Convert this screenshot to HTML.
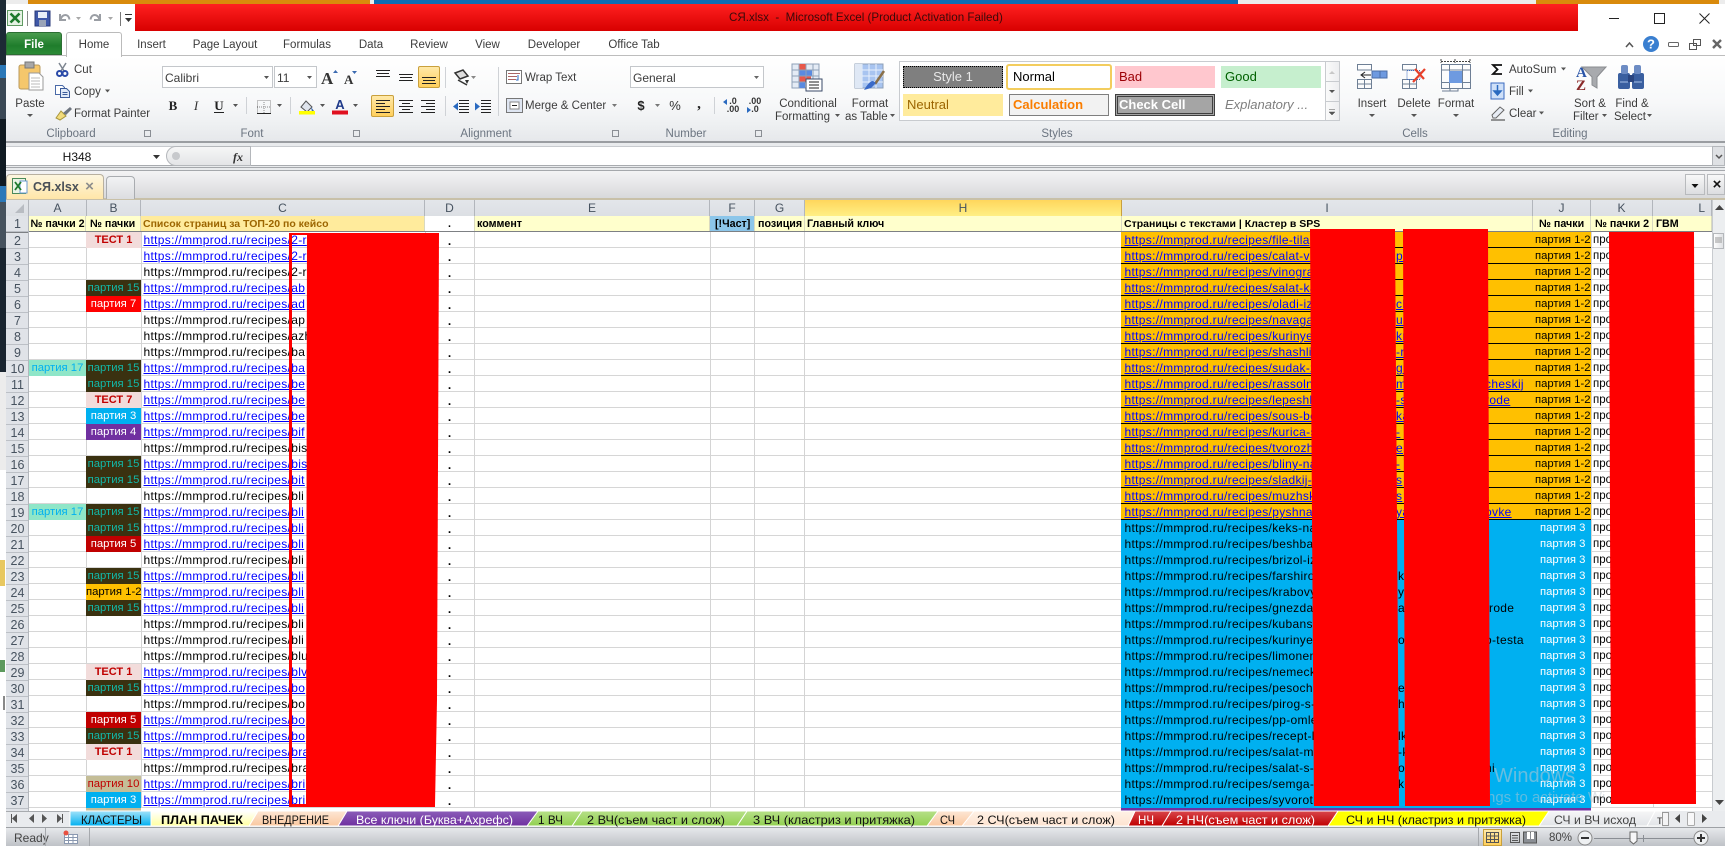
<!DOCTYPE html>
<html lang="ru"><head><meta charset="utf-8"><title>СЯ.xlsx - Microsoft Excel</title>
<style>
html,body{margin:0;padding:0;width:1725px;height:846px;overflow:hidden;background:#fff}
body{position:relative;font-family:"Liberation Sans","Noto Sans CJK SC",sans-serif;font-size:11.5px;color:#3c3c3c}
div,span,a{box-sizing:border-box}
.a{position:absolute}
.t{position:absolute;white-space:nowrap;line-height:16px;height:16px;margin-top:1px}
.c{transform:translateX(-50%)}
.g{color:#6b7480}
.h{position:absolute;top:200px;height:16px;background:linear-gradient(#e3e6ea,#dcdfe4);border-right:1px solid #b2b6bc;text-align:center;line-height:16px;font-size:12px;color:#46525f}
.r1{position:absolute;top:216px;height:15.5px;background:#ffffcc;font-weight:bold;font-size:10.7px;color:#000;line-height:17px;white-space:nowrap;overflow:hidden;padding-left:2px;border-right:1px solid #d9d9c0}
.v{position:absolute;top:232px;height:576px;width:1px;background:#d4d4d4}
.col{position:absolute;top:232px;font-size:12px;line-height:16px;white-space:nowrap;color:#000}
.col div{height:16px;position:relative}
.b{font-size:11.3px}
.b div{text-align:center}
.q{background:#3a3110;color:#12b8a8}
.e{background:#f2dcdb;color:#c00000;font-weight:bold;font-size:11px;line-height:17px}
.p3{background:#00b0f0;color:#fff}
.p4{background:#7030a0;color:#fff}
.p5{background:#c00000;color:#fff}
.p7{background:#f00;color:#fff}
.p1{background:#ffc000;color:#000}
.p0{background:#c4bd97;color:#c00000}
.p17{background:#8fe6c8;color:#00b0f0}
.u{padding-left:2.5px;letter-spacing:.32px;overflow:visible}
.u a{color:#00f;text-decoration:underline}
.o{background:#ffc000;box-shadow:inset 0 -1px #000}
.s{background:#00b0f0}
.i{padding-left:3.5px;letter-spacing:.32px}
.o a{color:#00f;text-decoration:underline}
.s a{color:#000}
.x{position:absolute;top:0}
.n div{text-align:center;border-bottom:1px solid #bcc0c6;color:#46525f;font-size:12.5px;background:#e0e3e8}
.j{font-size:11.3px}
.j .o{padding-left:2px}
.j .s{padding-left:7px;color:#fff}
svg{position:absolute;left:0;top:0;overflow:visible}
.sty{position:absolute;height:22px;line-height:22px;font-size:13px;padding-left:4px;white-space:nowrap}
</style></head><body>

<!-- desktop sliver -->
<div class="a" style="left:0;top:0;width:6px;height:65px;background:#1d2a35"></div>
<div class="a" style="left:0;top:65px;width:6px;height:13px;background:#2b78b8"></div>
<div class="a" style="left:0;top:78px;width:6px;height:41px;background:#3a4855"></div>
<div class="a" style="left:0;top:119px;width:6px;height:67px;background:#101a22"></div>
<div class="a" style="left:0;top:186px;width:6px;height:16px;background:#2b78b8"></div>
<div class="a" style="left:0;top:202px;width:6px;height:46px;background:#46525e"></div>
<div class="a" style="left:0;top:248px;width:6px;height:124px;background:#1a2530"></div>
<div class="a" style="left:0;top:372px;width:6px;height:98px;background:#ececec"></div>
<div class="a" style="left:0;top:470px;width:6px;height:376px;background:#fff"></div>
<div class="a" style="left:0;top:560px;width:5px;height:26px;background:#e8c860"></div>
<div class="a" style="left:0;top:660px;width:5px;height:12px;background:#5d9a5d"></div>
<div class="a" style="left:3px;top:696px;width:2px;height:14px;background:#888"></div>

<!-- top strip -->
<div class="a" style="left:6px;top:0;width:1719px;height:4px;background:#ececec"></div>
<div class="a" style="left:28px;top:0;width:342px;height:4px;background:#d98a0c"></div>
<div class="a" style="left:374px;top:0;width:864px;height:4px;background:#0d6cb3"></div>
<div class="a" style="left:1536px;top:0;width:183px;height:4px;background:#d98a0c"></div>

<!-- title -->
<div class="a" style="left:6px;top:4px;width:1719px;height:52px;background:#fff"></div>
<div class="a" style="left:135px;top:4px;width:1443px;height:27px;background:linear-gradient(#ff2020,#d80000)"></div>
<span class="t" style="left:729px;top:9px;font-size:11.6px;color:#3a0a0a">СЯ.xlsx&nbsp; -&nbsp; Microsoft Excel (Product Activation Failed)</span>

<!-- tabs -->
<div class="a" style="left:6px;top:32px;width:56px;height:23px;border-radius:3px 3px 0 0;background:linear-gradient(#4a9c4e,#1f7d2c 60%,#2b8a36);border:1px solid #2c6e33"></div>
<span class="t c" style="left:34px;top:36px;color:#fff;font-weight:bold">File</span>
<div class="a" style="left:66px;top:32px;width:56px;height:25px;background:#fff;border:1px solid #bbb;border-bottom:0;border-radius:3px 3px 0 0;z-index:2"></div>
<span class="t c" style="left:94px;top:36px;z-index:3">Home</span>
<span class="t c" style="left:151.5px;top:36px">Insert</span>
<span class="t c" style="left:225px;top:36px">Page Layout</span>
<span class="t c" style="left:307px;top:36px">Formulas</span>
<span class="t c" style="left:371px;top:36px">Data</span>
<span class="t c" style="left:429px;top:36px">Review</span>
<span class="t c" style="left:487.5px;top:36px">View</span>
<span class="t c" style="left:554px;top:36px">Developer</span>
<span class="t c" style="left:634px;top:36px">Office Tab</span>

<!-- ribbon -->
<div class="a" style="left:6px;top:55px;width:1719px;height:1px;background:#bdbdbd"></div>
<div class="a" style="left:6px;top:56px;width:1719px;height:85px;background:linear-gradient(#fff,#f7f8f9 55%,#eef0f2 80%,#e6e8eb)"></div>
<div class="a" style="left:6px;top:141px;width:1719px;height:2px;background:#9a9da1"></div>
<div class="a" style="left:6px;top:143px;width:1719px;height:27px;background:#e9ebed"></div>

<!-- ribbon combos -->
<div class="a" style="left:162px;top:66px;width:111px;height:22px;background:#fff;border:1px solid #c4c7cb"></div>
<div class="a" style="left:274px;top:66px;width:43px;height:22px;background:#fff;border:1px solid #c4c7cb"></div>
<div class="a" style="left:630px;top:66px;width:134px;height:22px;background:#fff;border:1px solid #c4c7cb"></div>
<div class="a" style="left:418px;top:66px;width:22px;height:22px;background:linear-gradient(#ffe9a8,#ffcf5c);border:1px solid #c9a03c;border-radius:2px"></div>
<div class="a" style="left:371px;top:95px;width:23px;height:22px;background:linear-gradient(#ffe9a8,#ffcf5c);border:1px solid #c9a03c;border-radius:2px"></div>

<span class="t c" style="left:30px;top:95px">Paste</span>
<span class="t" style="left:74px;top:61px">Cut</span>
<span class="t" style="left:74px;top:83px">Copy</span>
<span class="t" style="left:74px;top:105px">Format Painter</span>
<span class="t c g" style="left:71px;top:125px">Clipboard</span>
<span class="t" style="left:165px;top:69px;font-size:12px">Calibri</span>
<span class="t" style="left:277px;top:69px;font-size:12px">11</span>
<span class="t c g" style="left:252px;top:125px">Font</span>
<span class="t" style="left:525px;top:69px">Wrap Text</span>
<span class="t" style="left:525px;top:97px">Merge &amp; Center</span>
<span class="t c g" style="left:486px;top:125px">Alignment</span>
<span class="t" style="left:633px;top:69px;font-size:12px">General</span>
<span class="t c g" style="left:686px;top:125px">Number</span>
<span class="t c" style="left:808px;top:95px">Conditional</span>
<span class="t" style="left:775px;top:108px">Formatting</span>
<span class="t c" style="left:870px;top:95px">Format</span>
<span class="t" style="left:845px;top:108px">as Table</span>
<span class="t c g" style="left:1057px;top:125px">Styles</span>
<span class="t c" style="left:1372px;top:95px">Insert</span>
<span class="t c" style="left:1414px;top:95px">Delete</span>
<span class="t c" style="left:1456px;top:95px">Format</span>
<span class="t c g" style="left:1415px;top:125px">Cells</span>
<span class="t" style="left:1509px;top:61px">AutoSum</span>
<span class="t" style="left:1509px;top:83px">Fill</span>
<span class="t" style="left:1509px;top:105px">Clear</span>
<span class="t c" style="left:1590px;top:95px">Sort &amp;</span>
<span class="t" style="left:1573px;top:108px">Filter</span>
<span class="t c" style="left:1632px;top:95px">Find &amp;</span>
<span class="t" style="left:1614px;top:108px">Select</span>
<span class="t c g" style="left:1570px;top:125px">Editing</span>

<!-- styles gallery -->
<div class="a" style="left:899px;top:61px;width:441px;height:60px;background:#fff;border:1px solid #c8cbcf"></div>
<div class="sty" style="left:903px;top:66px;width:100px;background:#7f7f7f;color:#e8e8e8;text-align:center;padding:0;outline:1px dotted #000;outline-offset:-1px">Style 1</div>
<div class="sty" style="left:1006px;top:64px;width:106px;height:26px;line-height:22px;background:#fff;color:#000;border:2px solid #f3cd5e;border-radius:3px;padding-left:5px">Normal</div>
<div class="sty" style="left:1115px;top:66px;width:100px;background:#ffc7ce;color:#9c0006">Bad</div>
<div class="sty" style="left:1221px;top:66px;width:100px;background:#c6efce;color:#006100">Good</div>
<div class="sty" style="left:903px;top:94px;width:100px;background:#ffeb9c;color:#9c6500">Neutral</div>
<div class="sty" style="left:1009px;top:94px;width:100px;background:#f2f2f2;color:#fa7d00;font-weight:bold;border:1px solid #7f7f7f;line-height:20px;padding-left:3px">Calculation</div>
<div class="sty" style="left:1115px;top:94px;width:100px;background:#a5a5a5;color:#fff;font-weight:bold;border:3px double #3f3f3f;line-height:16px;padding-left:1px">Check Cell</div>
<div class="sty" style="left:1221px;top:94px;width:100px;color:#7f7f7f;font-style:italic">Explanatory ...</div>
<div class="a" style="left:1325px;top:61px;width:15px;height:60px;background:linear-gradient(90deg,#fafafa,#edeef0);border:1px solid #c8cbcf"></div>
<div class="a" style="left:1325px;top:81px;width:15px;height:1px;background:#c8cbcf"></div>
<div class="a" style="left:1325px;top:101px;width:15px;height:1px;background:#c8cbcf"></div>

<!-- formula bar -->
<div class="a" style="left:6px;top:146px;width:1706px;height:20px;background:#fff;border-bottom:1px solid #a8abaf;border-top:1px solid #c8cbcf"></div>
<span class="t c" style="left:77px;top:148px;font-size:12px;color:#111">H348</span>
<div class="a" style="left:166px;top:146px;width:85px;height:20px;background:linear-gradient(#f6f6f6,#e4e5e7);border:1px solid #b4b7bb;border-radius:10px 0 0 10px"></div>
<div class="a" style="left:172px;top:152px;width:8px;height:8px;border-radius:50%;background:#c7c9cc"></div>
<span class="t c" style="left:238px;top:148px;font:italic bold 12px 'Liberation Serif',serif;line-height:16px;color:#333">fx</span>
<div class="a" style="left:1712px;top:146px;width:13px;height:20px;background:#dfe1e4;border:1px solid #b4b7bb"></div>
<div class="a" style="left:6px;top:167px;width:1719px;height:3px;background:#e9ebed;border-top:1px solid #a5a8ac"></div>

<!-- document tab bar -->
<div class="a" style="left:6px;top:170px;width:1719px;height:28px;background:linear-gradient(#f4f4f5,#d8d9db);border-top:1px solid #a5a8ac"></div>
<div class="a" style="left:6px;top:198px;width:1719px;height:2px;background:#c8c0a8"></div>
<div class="a" style="left:6px;top:174px;width:98px;height:25px;border-radius:4px 4px 0 0;background:linear-gradient(#fdf6e0,#ffe6a8);border:1px solid #b8b0a0;border-bottom:0"></div>
<span class="t" style="left:33px;top:178px;font-size:12.5px;font-weight:bold;color:#4a5058">СЯ.xlsx</span>
<span class="t c" style="left:89.5px;top:178px;font-size:15px;color:#8c8c8c;font-weight:bold">×</span>
<div class="a" style="left:106px;top:176px;width:29px;height:23px;background:linear-gradient(#f2f3f4,#dcdde0);border:1px solid #a9acb0;border-bottom:0;border-radius:4px 4px 0 0"></div>
<div class="a" style="left:1685px;top:174px;width:20px;height:21px;background:linear-gradient(#f8f8f8,#dcdde0);border:1px solid #b8babd"></div>
<div class="a" style="left:1707px;top:174px;width:18px;height:21px;background:linear-gradient(#f8f8f8,#dcdde0);border:1px solid #b8babd"></div>
<span class="t c" style="left:1717px;top:176px;font-size:15px;font-weight:bold;color:#111">×</span>

<!-- column headers -->
<div class="h" style="left:6px;width:23px"></div>
<div class="h" style="left:29px;width:58px">A</div>
<div class="h" style="left:87px;width:54px">B</div>
<div class="h" style="left:141px;width:284px">C</div>
<div class="h" style="left:425px;width:50px">D</div>
<div class="h" style="left:475px;width:235px">E</div>
<div class="h" style="left:710px;width:45px">F</div>
<div class="h" style="left:755px;width:50px">G</div>
<div class="h" style="left:805px;width:317px;background:linear-gradient(#ffd65c,#ffef85);border-right-color:#c8a040">H</div>
<div class="h" style="left:1122px;width:411px">I</div>
<div class="h" style="left:1533px;width:58px">J</div>
<div class="h" style="left:1591px;width:62px">K</div>
<div class="h" style="left:1653px;width:59px;text-align:right;padding-right:6px">L</div>

<!-- row 1 -->
<div class="r1" style="left:29px;width:57px;padding-left:1.5px">№ пачки 2</div>
<div class="r1" style="left:86px;width:55px;padding-left:4px">№ пачки</div>
<div class="r1" style="left:141px;width:284px;background:#ffeb9c;color:#9c6500;font-size:10.5px">Список страниц за ТОП-20 по кейсо</div>
<div class="r1" style="left:425px;width:50px;background:#fff;text-align:center;padding:0">.</div>
<div class="r1" style="left:475px;width:235px">коммент</div>
<div class="r1" style="left:710px;width:45px;background:#8cc6ea;padding-left:5px">[!Част]</div>
<div class="r1" style="left:755px;width:50px;padding-left:3px">позиция</div>
<div class="r1" style="left:805px;width:317px">Главный ключ</div>
<div class="r1" style="left:1122px;width:411px;font-size:10.5px">Страницы с текстами | Кластер в SPS</div>
<div class="r1" style="left:1533px;width:58px;padding-left:6px">№ пачки</div>
<div class="r1" style="left:1591px;width:62px;padding-left:4px">№ пачки 2</div>
<div class="r1" style="left:1653px;width:59px;padding-left:3px">ГВМ</div>
<div class="a" style="left:6px;top:231px;width:1706px;height:1px;background:#7d8084"></div>

<!-- grid -->
<div class="a" style="left:29px;top:232px;width:1683px;height:579px;background:repeating-linear-gradient(to bottom,#fff 0,#fff 15px,#d6d6d6 15px,#d6d6d6 16px)"></div>
<div class="v" style="left:86px"></div><div class="v" style="left:141px"></div><div class="v" style="left:425px"></div><div class="v" style="left:474px"></div><div class="v" style="left:710px"></div><div class="v" style="left:754px"></div><div class="v" style="left:804px"></div><div class="v" style="left:1121px"></div><div class="v" style="left:1533px"></div><div class="v" style="left:1591px"></div><div class="v" style="left:1653px"></div>

<!-- row headers -->
<div class="col n" style="left:6px;width:23px;top:216px">
<div>1</div><div style="height:1px;background:#7d8084;border:0"></div><div>2</div><div>3</div><div>4</div><div>5</div><div>6</div><div>7</div><div>8</div><div>9</div><div>10</div><div>11</div><div>12</div><div>13</div><div>14</div><div>15</div><div>16</div><div>17</div><div>18</div><div>19</div><div>20</div><div>21</div><div>22</div><div>23</div><div>24</div><div>25</div><div>26</div><div>27</div><div>28</div><div>29</div><div>30</div><div>31</div><div>32</div><div>33</div><div>34</div><div>35</div><div>36</div><div>37</div><div style="height:3px"></div>
</div>
<div class="a" style="left:28px;top:200px;width:1px;height:611px;background:#b2b6bc"></div>

<!-- column A -->
<div class="col b" style="left:29px;width:57px">
<div class="p17" style="position:absolute;top:128px;left:0;width:57px">партия 17</div>
<div class="p17" style="position:absolute;top:272px;left:0;width:57px">партия 17</div>
</div>

<!-- column B -->
<div class="col b" style="left:86px;width:55px">
<div class="e">ТЕСТ 1</div><div></div><div></div>
<div class="q">партия 15</div>
<div class="p7">партия 7</div>
<div></div><div></div><div></div>
<div class="q">партия 15</div>
<div class="q">партия 15</div>
<div class="e">ТЕСТ 7</div>
<div class="p3">партия 3</div>
<div class="p4">партия 4</div>
<div></div>
<div class="q">партия 15</div>
<div class="q">партия 15</div>
<div></div>
<div class="q">партия 15</div>
<div class="q">партия 15</div>
<div class="p5">партия 5</div>
<div></div>
<div class="q">партия 15</div>
<div class="p1">партия 1-2</div>
<div class="q">партия 15</div>
<div></div><div></div><div></div>
<div class="e">ТЕСТ 1</div>
<div class="q">партия 15</div>
<div></div>
<div class="p5">партия 5</div>
<div class="q">партия 15</div>
<div class="e">ТЕСТ 1</div>
<div></div>
<div class="p0">партия 10</div>
<div class="p3">партия 3</div>
<div class="p0" style="height:3px"></div>
</div>

<!-- column C -->
<div class="col" style="left:141px;width:284px">
<div class="u"><a>https://mmprod.ru/recipes/2-r</a></div>
<div class="u"><a>https://mmprod.ru/recipes/2-r</a></div>
<div class="u">https://mmprod.ru/recipes/2-r</div>
<div class="u"><a>https://mmprod.ru/recipes/ab</a></div>
<div class="u"><a>https://mmprod.ru/recipes/ad</a></div>
<div class="u">https://mmprod.ru/recipes/ap</div>
<div class="u">https://mmprod.ru/recipes/azh</div>
<div class="u">https://mmprod.ru/recipes/ba</div>
<div class="u"><a>https://mmprod.ru/recipes/ba</a></div>
<div class="u"><a>https://mmprod.ru/recipes/be</a></div>
<div class="u"><a>https://mmprod.ru/recipes/be</a></div>
<div class="u"><a>https://mmprod.ru/recipes/be</a></div>
<div class="u"><a>https://mmprod.ru/recipes/bif</a></div>
<div class="u">https://mmprod.ru/recipes/bis</div>
<div class="u"><a>https://mmprod.ru/recipes/bis</a></div>
<div class="u"><a>https://mmprod.ru/recipes/bit</a></div>
<div class="u">https://mmprod.ru/recipes/bli</div>
<div class="u"><a>https://mmprod.ru/recipes/bli</a></div>
<div class="u"><a>https://mmprod.ru/recipes/bli</a></div>
<div class="u"><a>https://mmprod.ru/recipes/bli</a></div>
<div class="u">https://mmprod.ru/recipes/bli</div>
<div class="u"><a>https://mmprod.ru/recipes/bli</a></div>
<div class="u"><a>https://mmprod.ru/recipes/bli</a></div>
<div class="u"><a>https://mmprod.ru/recipes/bli</a></div>
<div class="u">https://mmprod.ru/recipes/bli</div>
<div class="u">https://mmprod.ru/recipes/bli</div>
<div class="u">https://mmprod.ru/recipes/blu</div>
<div class="u"><a>https://mmprod.ru/recipes/blv</a></div>
<div class="u"><a>https://mmprod.ru/recipes/bo</a></div>
<div class="u">https://mmprod.ru/recipes/bo</div>
<div class="u"><a>https://mmprod.ru/recipes/bo</a></div>
<div class="u"><a>https://mmprod.ru/recipes/bo</a></div>
<div class="u"><a>https://mmprod.ru/recipes/bra</a></div>
<div class="u">https://mmprod.ru/recipes/bra</div>
<div class="u"><a>https://mmprod.ru/recipes/bri</a></div>
<div class="u"><a>https://mmprod.ru/recipes/bri</a></div>
</div>

<!-- column D dots -->
<div class="col b" style="left:425px;width:49px;font-weight:bold;top:233px;font-size:12px">
<div>.</div><div>.</div><div>.</div><div>.</div><div>.</div><div>.</div><div>.</div><div>.</div><div>.</div><div>.</div><div>.</div><div>.</div><div>.</div><div>.</div><div>.</div><div>.</div><div>.</div><div>.</div><div>.</div><div>.</div><div>.</div><div>.</div><div>.</div><div>.</div><div>.</div><div>.</div><div>.</div><div>.</div><div>.</div><div>.</div><div>.</div><div>.</div><div>.</div><div>.</div><div>.</div><div>.</div>
</div>

<!-- column I -->
<div class="col" style="left:1121px;width:412px">
<div class="o i"><a>https://mmprod.ru/recipes/file-tilap</a></div>
<div class="o i"><a>https://mmprod.ru/recipes/calat-vitam</a><a class="x" style="left:275px">pa</a></div>
<div class="o i"><a>https://mmprod.ru/recipes/vinogradn</a></div>
<div class="o i"><a>https://mmprod.ru/recipes/salat-kalm</a></div>
<div class="o i"><a>https://mmprod.ru/recipes/oladi-iz-te</a><a class="x" style="left:275px">ch</a></div>
<div class="o i"><a>https://mmprod.ru/recipes/navaga-je</a><a class="x" style="left:275px">uk</a></div>
<div class="o i"><a>https://mmprod.ru/recipes/kurinye-ne</a><a class="x" style="left:275px">kr</a></div>
<div class="o i"><a>https://mmprod.ru/recipes/shashlik-iz</a><a class="x" style="left:275px">-r</a></div>
<div class="o i"><a>https://mmprod.ru/recipes/sudak-zap</a><a class="x" style="left:275px">ga</a></div>
<div class="o i"><a>https://mmprod.ru/recipes/rassolnik-</a><a class="x" style="left:275px">m</a><a class="x" style="left:364px">cheskij</a></div>
<div class="o i"><a>https://mmprod.ru/recipes/lepeshki-s</a><a class="x" style="left:275px">-s</a><a class="x" style="left:364px">rode</a></div>
<div class="o i"><a>https://mmprod.ru/recipes/sous-besh</a><a class="x" style="left:275px">ka</a></div>
<div class="o i"><a>https://mmprod.ru/recipes/kurica-s-o</a><a class="x" style="left:275px">-</a></div>
<div class="o i"><a>https://mmprod.ru/recipes/tvorozhnyj</a><a class="x" style="left:275px">e</a></div>
<div class="o i"><a>https://mmprod.ru/recipes/bliny-na-k</a><a class="x" style="left:275px">-</a></div>
<div class="o i"><a>https://mmprod.ru/recipes/sladkij-pir</a><a class="x" style="left:275px">s</a></div>
<div class="o i"><a>https://mmprod.ru/recipes/muzhskoj-</a><a class="x" style="left:275px">s</a></div>
<div class="o i"><a>https://mmprod.ru/recipes/pyshnaya-</a><a class="x" style="left:275px">ya</a><a class="x" style="left:364px">ovke</a></div>
<div class="s i"><a>https://mmprod.ru/recipes/keks-na-k</a></div>
<div class="s i"><a>https://mmprod.ru/recipes/beshbarm</a></div>
<div class="s i"><a>https://mmprod.ru/recipes/brizol-iz-</a></div>
<div class="s i"><a>https://mmprod.ru/recipes/farshirova</a><a class="x" style="left:277px">k</a></div>
<div class="s i"><a>https://mmprod.ru/recipes/krabovyj-s</a><a class="x" style="left:277px">ya</a></div>
<div class="s i"><a>https://mmprod.ru/recipes/gnezda-i</a><a class="x" style="left:277px">ar</a><a class="x" style="left:368px">rode</a></div>
<div class="s i"><a>https://mmprod.ru/recipes/kubanskij</a></div>
<div class="s i"><a>https://mmprod.ru/recipes/kurinye-r</a><a class="x" style="left:277px">o</a><a class="x" style="left:364px">o-testa</a></div>
<div class="s i"><a>https://mmprod.ru/recipes/limonen</a></div>
<div class="s i"><a>https://mmprod.ru/recipes/nemeckij</a></div>
<div class="s i"><a>https://mmprod.ru/recipes/pesochn</a><a class="x" style="left:277px">ec</a></div>
<div class="s i"><a>https://mmprod.ru/recipes/pirog-s-k</a><a class="x" style="left:277px">h</a></div>
<div class="s i"><a>https://mmprod.ru/recipes/pp-omlet</a></div>
<div class="s i"><a>https://mmprod.ru/recipes/recept-ly</a><a class="x" style="left:277px">lk</a></div>
<div class="s i"><a>https://mmprod.ru/recipes/salat-mi</a><a class="x" style="left:277px">-k</a></div>
<div class="s i"><a>https://mmprod.ru/recipes/salat-s-k</a><a class="x" style="left:277px">ov</a><a class="x" style="left:364px">ni</a></div>
<div class="s i"><a>https://mmprod.ru/recipes/semga-s</a><a class="x" style="left:277px">ke</a></div>
<div class="s i"><a>https://mmprod.ru/recipes/syvorotk</a></div>
<div style="height:3px;background:#7030a0"></div>
</div>

<!-- column J -->
<div class="col j" style="left:1533px;width:58px">
<div class="o">партия 1-2</div><div class="o">партия 1-2</div><div class="o">партия 1-2</div><div class="o">партия 1-2</div><div class="o">партия 1-2</div><div class="o">партия 1-2</div><div class="o">партия 1-2</div><div class="o">партия 1-2</div><div class="o">партия 1-2</div><div class="o">партия 1-2</div><div class="o">партия 1-2</div><div class="o">партия 1-2</div><div class="o">партия 1-2</div><div class="o">партия 1-2</div><div class="o">партия 1-2</div><div class="o">партия 1-2</div><div class="o">партия 1-2</div><div class="o">партия 1-2</div>
<div class="s">партия 3</div><div class="s">партия 3</div><div class="s">партия 3</div><div class="s">партия 3</div><div class="s">партия 3</div><div class="s">партия 3</div><div class="s">партия 3</div><div class="s">партия 3</div><div class="s">партия 3</div><div class="s">партия 3</div><div class="s">партия 3</div><div class="s">партия 3</div><div class="s">партия 3</div><div class="s">партия 3</div><div class="s">партия 3</div><div class="s">партия 3</div><div class="s">партия 3</div><div class="s">партия 3</div>
<div style="height:3px;background:#7030a0"></div>
</div>

<!-- column K -->
<div class="col" style="left:1593px;width:18px;overflow:hidden;font-size:11.5px">
<div>про</div><div>про</div><div>про</div><div>про</div><div>про</div><div>про</div><div>про</div><div>про</div><div>про</div><div>про</div><div>про</div><div>про</div><div>про</div><div>про</div><div>про</div><div>про</div><div>про</div><div>про</div><div>про</div><div>про</div><div>про</div><div>про</div><div>про</div><div>про</div><div>про</div><div>про</div><div>про</div><div>про</div><div>про</div><div>про</div><div>про</div><div>про</div><div>про</div><div>про</div><div>про</div><div>про</div>
</div>

<!-- watermark -->
<span class="t" style="left:1494px;top:763px;height:24px;line-height:24px;font-size:20px;color:rgba(190,200,210,.55)">Windows</span>
<span class="t" style="left:1487px;top:789px;font-size:15px;color:rgba(190,200,210,.5)">ngs to activate Wi</span>

<!-- scrollbar -->
<div class="a" style="left:1712px;top:200px;width:13px;height:611px;background:#eceef0;border-left:1px solid #c8cbcf"></div>
<div class="a" style="left:1713px;top:233px;width:11px;height:16px;background:linear-gradient(90deg,#fdfdfd,#e0e2e5);border:1px solid #b4b7bb"></div>

<!-- sheet tab bar + status -->
<div class="a" style="left:6px;top:811px;width:1719px;height:16px;background:#e9ebee"></div>
<div class="a" style="left:6px;top:827px;width:1719px;height:19px;background:linear-gradient(#e6e8eb,#bfc2c7);border-top:1px solid #9ea1a5"></div>
<span class="t" style="left:14px;top:829px;color:#444;font-size:12px">Ready</span>
<div class="a" style="left:45px;top:828px;width:1px;height:18px;background:#a6a9ad"></div>
<div class="a" style="left:89px;top:828px;width:1px;height:18px;background:#a6a9ad"></div>
<div class="a" style="left:1478px;top:828px;width:1px;height:18px;background:#a6a9ad"></div>
<div class="a" style="left:1483px;top:829px;width:19px;height:17px;background:linear-gradient(#ffe9a8,#ffcf5c);border:1px solid #c9a03c"></div>
<span class="t" style="left:1549px;top:829px;color:#444;font-size:11.5px">80%</span>

<!-- vector icons and tabs -->
<svg width="1725" height="846" viewBox="0 0 1725 846" font-family="Liberation Sans, sans-serif">
<!-- QAT -->
<rect x="7.5" y="10.5" width="15" height="15" fill="#e6f2e4" stroke="#5f9a62"/><path d="M10.5 13.5l9 9M19.5 13.5l-9 9" stroke="#1d7a2b" stroke-width="2.6"/>
<path d="M27.5 11v15" stroke="#888"/>
<rect x="35" y="11" width="15" height="15" fill="#3f58a8" stroke="#2a3a78"/><rect x="38" y="12" width="9" height="6" fill="#e8eef8"/><rect x="39" y="20" width="7" height="6" fill="#9aa4b8"/>
<path d="M60 14v6h6M60.5 19.5c2-6 8-6 9 0" fill="none" stroke="#9a9ea4" stroke-width="2"/>
<path d="M100 14v6h-6M99.5 19.5c-2-6-8-6-9 0" fill="none" stroke="#9a9ea4" stroke-width="2"/>
<path d="M76 17h5l-2.500 3zM108 17h5l-2.500 3z" fill="#a8a8a8"/>
<path d="M120.5 12v14" stroke="#777"/>
<path d="M125 14.500h7" stroke="#333"/><path d="M125 18h7l-3.500 4z" fill="#333"/>

<!-- window controls -->
<path d="M1609 18.500h10" stroke="#222"/><rect x="1654.500" y="13.500" width="10" height="10" fill="none" stroke="#222"/><path d="M1699.500 13.500l10 10M1709.500 13.500l-10 10" stroke="#222"/>
<path d="M1626 47l3.500-4 3.500 4" fill="none" stroke="#555" stroke-width="1.500"/>
<circle cx="1651" cy="44" r="8" fill="#3a7fd0"/><text x="1651" y="48.500" text-anchor="middle" font-size="13" font-weight="bold" fill="#fff">?</text>
<rect x="1668.500" y="42.500" width="10" height="4" rx="1" fill="#fff" stroke="#666"/>
<rect x="1689.500" y="43.500" width="7" height="6" fill="#fff" stroke="#555"/><rect x="1693.500" y="39.500" width="7" height="6" fill="none" stroke="#555"/>
<path d="M1713 40l8 8M1721 40l-8 8" stroke="#666" stroke-width="2.400"/>

<!-- Paste -->
<rect x="19" y="65" width="21" height="24" rx="2" fill="#f5c76c" stroke="#b99a5e"/><rect x="25" y="62" width="9" height="6" fill="#a8a8a8" stroke="#777"/>
<path d="M29 73h10l4 4v13H29z" fill="#fff" stroke="#9a9a9a"/><path d="M31 78h9M31 81h9M31 84h9M31 87h9" stroke="#bbb"/>
<path d="M27 114h6l-3 3z" fill="#555"/>
<!-- Cut -->
<path d="M59 63l5 8M66 63l-5 8" stroke="#7d8590" stroke-width="1.500"/><circle cx="59.500" cy="73.500" r="2.500" fill="none" stroke="#2a4aa8" stroke-width="2"/><circle cx="65" cy="73.500" r="2.500" fill="none" stroke="#2a4aa8" stroke-width="2"/>
<!-- Copy -->
<path d="M55.500 85.500h7l2 2v7h-9z" fill="#fff" stroke="#4a6aa8"/><path d="M60.500 88.500h6l3 3v6h-9z" fill="#dfe9f8" stroke="#3a5a9a"/><path d="M62.500 92.500h5M62.500 94.500h5" stroke="#3a5a9a"/>
<path d="M105 89.500h5l-2.500 3z" fill="#555"/>
<!-- Painter -->
<path d="M56 118l5-7 5 5-6 4z" fill="#f3dc7c" stroke="#a8963c"/><path d="M63 113l7-6 2 2-6 6z" fill="#6f7680"/>
<!-- Font -->
<path d="M264 76h5l-2.500 3zM307 76h5l-2.500 3z" fill="#555"/>
<text x="321" y="84" font-family="Liberation Serif" font-size="17" font-weight="bold" fill="#333">A</text><path d="M333 73l2.500-3 2.500 3z" fill="#3a6ab0"/>
<text x="344" y="84" font-family="Liberation Serif" font-size="13" font-weight="bold" fill="#333">A</text><path d="M352 71h5l-2.500 3z" fill="#3a6ab0"/>
<text x="173" y="110" text-anchor="middle" font-family="Liberation Serif" font-size="13" font-weight="bold" fill="#222">B</text>
<text x="196" y="110" text-anchor="middle" font-family="Liberation Serif" font-size="13" font-style="italic" fill="#333">I</text>
<text x="219" y="110" text-anchor="middle" font-family="Liberation Serif" font-size="13" font-weight="bold" fill="#222">U</text><path d="M214 112.500h10" stroke="#222"/>
<path d="M233 104h5l-2.500 3zM277 104h5l-2.500 3zM320 104h5l-2.500 3zM353 104h5l-2.500 3z" fill="#555"/>
<path d="M246.500 97v17M290.500 97v17M445.500 67v21M445.500 96v20M498.500 67v49M714.500 97v17" stroke="#cfd2d6"/>
<path d="M257.500 100.500h13v13h-13zM264 100v14M257 107h14" fill="none" stroke="#8a8a8a" stroke-dasharray="1 1"/><path d="M257 113.500h14" stroke="#222"/>
<path d="M301 107l5-6 6 6-5 5z" fill="#dfe4ec" stroke="#555"/><path d="M311 107l3 4-2 1z" fill="#3a6ab0"/><rect x="299" y="111" width="16" height="3.500" fill="#ff0"/>
<text x="340" y="109" text-anchor="middle" font-family="Liberation Sans" font-size="13" font-weight="bold" fill="#1f3a8a">A</text><rect x="332" y="110.500" width="16" height="4" fill="#e01020"/>
<!-- launchers -->
<g fill="none" stroke="#8a8e94"><rect x="144.500" y="130.500" width="6" height="6"/><rect x="353.500" y="130.500" width="6" height="6"/><rect x="612.500" y="130.500" width="6" height="6"/><rect x="755.500" y="130.500" width="6" height="6"/></g>
<!-- align icons -->
<g stroke="#222"><path d="M376 70.500h14M377 73.500h12M376 76.500h14"/><path d="M399 74.500h14M400 77.500h12M399 80.500h14"/><path d="M422 77.500h14M423 80.500h12M422 83.500h14"/>
<path d="M376 100.500h14M376 103.500h9M376 106.500h14M376 109.500h9M376 112.500h14"/><path d="M399 100.500h14M402 103.500h8M399 106.500h14M402 109.500h8M399 112.500h14"/><path d="M421 100.500h14M426 103.500h9M421 106.500h14M426 109.500h9M421 112.500h14"/></g>
<path d="M455 73l8-3 5 6-8 3zM458 80l9 5" fill="#ddd" stroke="#333" stroke-width="1.500"/><path d="M467 84l2-4-4 0z" fill="#333"/><path d="M471 76h5l-2.500 3z" fill="#888"/>
<path d="M459 100.500h10M459 103.500h10M459 106.500h10M459 109.500h10M459 112.500h10M481 100.500h10M481 103.500h10M481 106.500h10M481 109.500h10M481 112.500h10" stroke="#222"/>
<path d="M453 106.500l5-4v8zM480 106.500l-5-4v8z" fill="#2a6ac0"/>
<!-- wrap/merge -->
<rect x="506.500" y="70.500" width="15" height="13" fill="#fff" stroke="#777"/><path d="M508 73.500h12M508 76.500h9M508 79.500h8" stroke="#a66" /><path d="M518 75v5h-2" stroke="#2a6ac0" fill="none"/>
<rect x="506.500" y="98.500" width="16" height="14" fill="#dfe6f2" stroke="#777"/><rect x="510" y="102" width="9" height="7" fill="#fff" stroke="#888"/><path d="M512 105.500h5" stroke="#222"/>
<path d="M612 104h5l-2.500 3z" fill="#777"/>
<!-- number -->
<path d="M754 76h5l-2.500 3z" fill="#666"/>
<text x="641" y="110" text-anchor="middle" font-size="13" font-weight="bold" fill="#222">$</text><path d="M655 104h5l-2.500 3z" fill="#777"/>
<text x="675" y="110" text-anchor="middle" font-size="13" fill="#333">%</text>
<text x="699" y="108" text-anchor="middle" font-size="15" font-weight="bold" font-family="Liberation Serif" fill="#222">,</text>
<text x="733" y="104" text-anchor="middle" font-size="9" font-weight="bold" fill="#333">.0</text><text x="733" y="112" text-anchor="middle" font-size="9" font-weight="bold" fill="#333">.00</text><path d="M723 102l4-3v6z" fill="#2a6ac0"/>
<text x="755" y="104" text-anchor="middle" font-size="9" font-weight="bold" fill="#333">.00</text><text x="755" y="112" text-anchor="middle" font-size="9" font-weight="bold" fill="#333">.0</text><path d="M751 110l-4-3v6z" fill="#2a6ac0"/>
<!-- conditional formatting -->
<g><rect x="792" y="64" width="27" height="24" fill="#e4ebf5" stroke="#8ea0b8"/><rect x="799" y="64" width="7" height="6" fill="#e8584a"/><rect x="799" y="70" width="13" height="6" fill="#5a8ae0"/><rect x="799" y="76" width="12" height="6" fill="#e8584a"/><rect x="799" y="82" width="6" height="6" fill="#5a8ae0"/><path d="M792 70h27M792 76h27M792 82h27M799 64v24M806 64v24M813 64v24" stroke="#8ea0b8" fill="none"/><rect x="806" y="79" width="16" height="12" fill="#fff" stroke="#3a4a68"/><path d="M809 82h10M809 85h10M809 88h10" stroke="#222"/></g>
<path d="M835 114h5l-2.500 3zM890 114h5l-2.500 3z" fill="#555"/>
<!-- as table -->
<rect x="855" y="64" width="28" height="24" fill="#a8c4f0" stroke="#8ea0b8"/><path d="M855 70h28M855 76h28M855 82h28M862 64v24M869 64v24M876 64v24" stroke="#e8f0fc"/><path d="M855 64h7v24h-7z" fill="#dfe8f5"/>
<path d="M884 71l-9 13" stroke="#8a7048" stroke-width="2.500"/><path d="M876 83l-5 5-7 2c3-5 6-9 9-9z" fill="#3a6ac8"/>
<!-- gallery scroll -->
<path d="M1329 74h6l-3-3z" fill="#c8c8c8"/><path d="M1329 90h6l-3 3z" fill="#555"/><path d="M1329 109.500h6M1329 112h6l-3 3z" fill="#555" stroke="#555" stroke-width=".5"/>
<!-- Insert/Delete/Format -->
<g fill="none" stroke="#6e7f95"><rect x="1357.500" y="64.500" width="14" height="5.500"/><rect x="1357.500" y="79.500" width="14" height="9"/><path d="M1364.500 79.500v9M1357.500 84h14"/>
<rect x="1402.500" y="64.500" width="14" height="5.500"/><rect x="1402.500" y="79.500" width="14" height="9"/><path d="M1409.500 79.500v9M1402.500 84h14"/>
<rect x="1441.500" y="64.500" width="29" height="24"/><path d="M1441.500 70h29M1441.500 82.500h29M1449.500 64.500v24M1462.500 64.500v24"/><path d="M1442 91h8v-3M1450 91h8v-3" /></g>
<rect x="1372" y="71" width="15" height="7" fill="#6e9ae0" stroke="#4a6ea8"/><path d="M1380 71v7" stroke="#4a6ea8"/><path d="M1362 75h9M1365 72l-4 3 4 3" fill="none" stroke="#222"/>
<path d="M1407 70.500h13v9h-13z" fill="none" stroke="#3a6ac0" stroke-dasharray="1 1"/><path d="M1415 69l9 10M1425 69l-12 13" stroke="#e8402a" stroke-width="2.200"/>
<rect x="1449" y="71" width="13" height="12" fill="#6e9ae0"/><path d="M1441 61.500h29M1441 59v4M1455 59v4M1470 59v4" stroke="#444" stroke-dasharray="2 1"/>
<path d="M1369 114h6l-3 3zM1411 114h6l-3 3zM1453 114h6l-3 3zM1561 67.500h5l-2.500 3zM1528 89.500h5l-2.500 3zM1539 111.500h5l-2.500 3zM1602 114h5l-2.500 3zM1647 114h5l-2.500 3z" fill="#555"/>
<!-- Sigma / fill / clear -->
<path d="M1502 65h-9l4.500 4.500-4.500 4.500h9" fill="none" stroke="#111" stroke-width="1.800"/>
<rect x="1491" y="83" width="13" height="16" fill="#cfe0f8" stroke="#3a6ac0"/><path d="M1497.500 85v9M1494 91l3.500 4 3.500-4z" fill="#2a6ac0" stroke="#2a6ac0" stroke-width="1.500"/>
<path d="M1492 115l8-8 4 3-8 8h-3z" fill="#e8edf5" stroke="#666"/><path d="M1491 120h14" stroke="#333"/>
<!-- sort -->
<text x="1576" y="77" font-family="Liberation Serif" font-size="15" font-weight="bold" fill="#2a55a8">A</text><text x="1576" y="90" font-family="Liberation Serif" font-size="15" font-weight="bold" fill="#8a2a2a">Z</text>
<path d="M1582 67h24l-9 10v11l-5-3v-8z" fill="#a8aaae" stroke="#8a8c90"/>
<!-- find -->
<rect x="1618" y="73" width="12" height="16" rx="2" fill="#3a5fa0"/><rect x="1632" y="73" width="12" height="16" rx="2" fill="#3a5fa0"/><rect x="1621" y="65" width="7" height="9" rx="2" fill="#6d8cc4"/><rect x="1634" y="65" width="7" height="9" rx="2" fill="#6d8cc4"/><rect x="1628" y="75" width="6" height="7" fill="#2a4580"/><path d="M1620 82h8M1634 82h8" stroke="#a8c0e8"/>
<!-- formula -->
<path d="M153 155h7l-3.500 4z" fill="#333"/>
<path d="M1716 155l3 3 3-3" fill="none" stroke="#555" stroke-width="1.500"/>
<!-- doc tab icon -->
<rect x="12.500" y="178.500" width="13" height="15" fill="#eaf4e4" stroke="#4a8a5a"/><rect x="20" y="181" width="7" height="12" fill="#fff" stroke="#6a9ad0"/><path d="M15 182l6 8M21 182l-6 8" stroke="#1d7a2b" stroke-width="1.800"/>
<path d="M1691.500 184h7l-3.500 4z" fill="#111"/>
<!-- corner -->
<path d="M24 204v9h-9z" fill="#b8bcc2"/>
<!-- scrollbar -->
<path d="M1715 210h9l-4.500-5z" fill="#444"/><path d="M1715 800h9l-4.500 5z" fill="#444"/><path d="M1715 238h7M1715 240h7M1715 242h7" stroke="#999"/>
<!-- sheet nav -->
<g fill="#555"><path d="M17 814v9l-5-4.500zM11 814h1v9h-1zM34 814v9l-5-4.500zM42 814v9l5 -4.500zM57 814v9l5-4.500zM62 814h1v9h-1z"/></g>

<!-- sheet tabs -->
<defs>
<linearGradient id="a1" x1="0" y1="0" x2="0" y2="1"><stop offset="0" stop-color="#a0e2fa"/><stop offset="1" stop-color="#00b0f0"/></linearGradient>
<linearGradient id="a2" x1="0" y1="0" x2="0" y2="1"><stop offset="0" stop-color="#fff"/><stop offset="1" stop-color="#ffffa0"/></linearGradient>
<linearGradient id="a3" x1="0" y1="0" x2="0" y2="1"><stop offset="0" stop-color="#fde6d4"/><stop offset="1" stop-color="#fac8a0"/></linearGradient>
<linearGradient id="a4" x1="0" y1="0" x2="0" y2="1"><stop offset="0" stop-color="#8a5cb8"/><stop offset="1" stop-color="#7030a0"/></linearGradient>
<linearGradient id="a5" x1="0" y1="0" x2="0" y2="1"><stop offset="0" stop-color="#b6e088"/><stop offset="1" stop-color="#92d050"/></linearGradient>
<linearGradient id="a7" x1="0" y1="0" x2="0" y2="1"><stop offset="0" stop-color="#fff1e6"/><stop offset="1" stop-color="#fde3d0"/></linearGradient>
<linearGradient id="a8" x1="0" y1="0" x2="0" y2="1"><stop offset="0" stop-color="#d8464c"/><stop offset="1" stop-color="#c00000"/></linearGradient>
<linearGradient id="a9" x1="0" y1="0" x2="0" y2="1"><stop offset="0" stop-color="#f6f6f7"/><stop offset="1" stop-color="#e2e4e7"/></linearGradient>
</defs>
<path d="M6 811.500h1706" stroke="#a8abaf"/>
<g stroke="#fff" stroke-width="1">
<polygon points="1647,826 1655,811 1662,811 1662,826" fill="url(#a9)"/>
<polygon points="1539,826 1549,811 1655,811 1647,826" fill="url(#a9)"/>
<polygon points="1328,826 1338,811 1549,811 1539,826" fill="#ff0"/>
<polygon points="1162,826 1171,811 1338,811 1328,826" fill="url(#a8)"/>
<polygon points="1128,826 1135,811 1171,811 1162,826" fill="url(#a8)"/>
<polygon points="962,826 974,811 1135,811 1128,826" fill="url(#a7)"/>
<polygon points="927,826 938,811 974,811 962,826" fill="url(#a3)"/>
<polygon points="737,826 747,811 938,811 927,826" fill="url(#a5)"/>
<polygon points="572,826 582,811 747,811 737,826" fill="url(#a5)"/>
<polygon points="527,826 538,811 582,811 572,826" fill="url(#a5)"/>
<polygon points="338,826 347,811 538,811 527,826" fill="url(#a4)"/>
<polygon points="249,826 258,811 347,811 338,826" fill="url(#a3)"/>
<polygon points="70,826 70,811 151,811 151,826" fill="url(#a1)"/>
<polygon points="151,826 151,811 258,811 249,826" fill="url(#a2)"/>
</g>
<g font-size="12" fill="#111">
<text x="81" y="824" textLength="61" lengthAdjust="spacingAndGlyphs">КЛАСТЕРЫ</text>
<text x="161" y="824" textLength="82" lengthAdjust="spacingAndGlyphs" font-weight="bold" fill="#000">ПЛАН ПАЧЕК</text>
<text x="262" y="824" textLength="67" lengthAdjust="spacingAndGlyphs">ВНЕДРЕНИЕ</text>
<text x="356" y="824" textLength="157" lengthAdjust="spacingAndGlyphs" fill="#fff">Все ключи (Буква+Ахрефс)</text>
<text x="538" y="824" textLength="25" lengthAdjust="spacingAndGlyphs">1 ВЧ</text>
<text x="587" y="824" textLength="138" lengthAdjust="spacingAndGlyphs">2 ВЧ(съем част и слож)</text>
<text x="753" y="824" textLength="162" lengthAdjust="spacingAndGlyphs">3 ВЧ (кластриз и притяжка)</text>
<text x="940" y="824" textLength="15" lengthAdjust="spacingAndGlyphs">СЧ</text>
<text x="977" y="824" textLength="138" lengthAdjust="spacingAndGlyphs">2 СЧ(съем част и слож)</text>
<text x="1138" y="824" textLength="16" lengthAdjust="spacingAndGlyphs" fill="#fff">НЧ</text>
<text x="1176" y="824" textLength="139" lengthAdjust="spacingAndGlyphs" fill="#fff">2 НЧ(съем част и слож)</text>
<text x="1346" y="824" textLength="180" lengthAdjust="spacingAndGlyphs">СЧ и НЧ (кластриз и притяжка)</text>
<text x="1554" y="824" textLength="82" lengthAdjust="spacingAndGlyphs" fill="#444">СЧ и ВЧ исход</text>
<text x="1657" y="824" fill="#444">т</text>
</g>
<!-- sheet scroll -->
<rect x="1662" y="811" width="63" height="16" fill="#e9ebee"/>
<rect x="1662.500" y="812.500" width="6" height="13" fill="#f4f4f5" stroke="#999"/>
<path d="M1680 814v9l-5-4.500zM1702 814v9l5-4.500z" fill="#444"/>
<rect x="1687.500" y="812.500" width="7" height="13" fill="#f8f8f9" stroke="#aaa" rx="1"/>
<!-- status icons -->
<rect x="64.500" y="834.500" width="13" height="9" fill="#fff" stroke="#8a98b0"/><path d="M64 837.500h14M64 840.500h14M68.500 835v9M73 835v9" stroke="#8a98b0"/><circle cx="66" cy="833" r="2.500" fill="#e85040"/>
<g fill="none" stroke="#555"><rect x="1486.500" y="832.500" width="12" height="10"/><path d="M1486 836h13M1486 839.500h13M1490.500 832v11M1494.500 832v11"/><rect x="1510.500" y="832.500" width="9" height="10"/><path d="M1512 835.500h6M1512 838h6M1512 840.500h6" /></g>
<rect x="1523.500" y="832" width="13" height="11" fill="#8a8e94" stroke="#555"/><rect x="1527" y="832" width="3" height="7" fill="#fff"/><rect x="1531" y="832" width="3" height="7" fill="#fff"/>
<circle cx="1585" cy="838" r="7" fill="#eef0f2" stroke="#888"/><path d="M1581 838h8" stroke="#333" stroke-width="2"/>
<circle cx="1701" cy="838" r="7" fill="#eef0f2" stroke="#888"/><path d="M1697 838h8M1701 834v8" stroke="#333" stroke-width="2"/>
<path d="M1594 838.500h100" stroke="#8a8e94"/><path d="M1643.500 835v7" stroke="#8a8e94"/>
<path d="M1630 832h7v9l-3.500 3-3.500-3z" fill="#f6f6f7" stroke="#666"/>

<!-- redactions -->
<g fill="#f00">
<path d="M289 233h3v573h-3z"/><path d="M289 804h146v3H289z"/><path d="M289 233h20v2h-20z"/>
<polygon points="307,233 439,233 437,700 435,805 306,805"/>
<polygon points="1310,229 1395,229 1399,806 1314,806"/>
<polygon points="1403,229 1488,229 1490,806 1405,806"/>
<polygon points="1609,232 1694,232 1696,804 1611,804"/>
</g>
</svg>
</body></html>
